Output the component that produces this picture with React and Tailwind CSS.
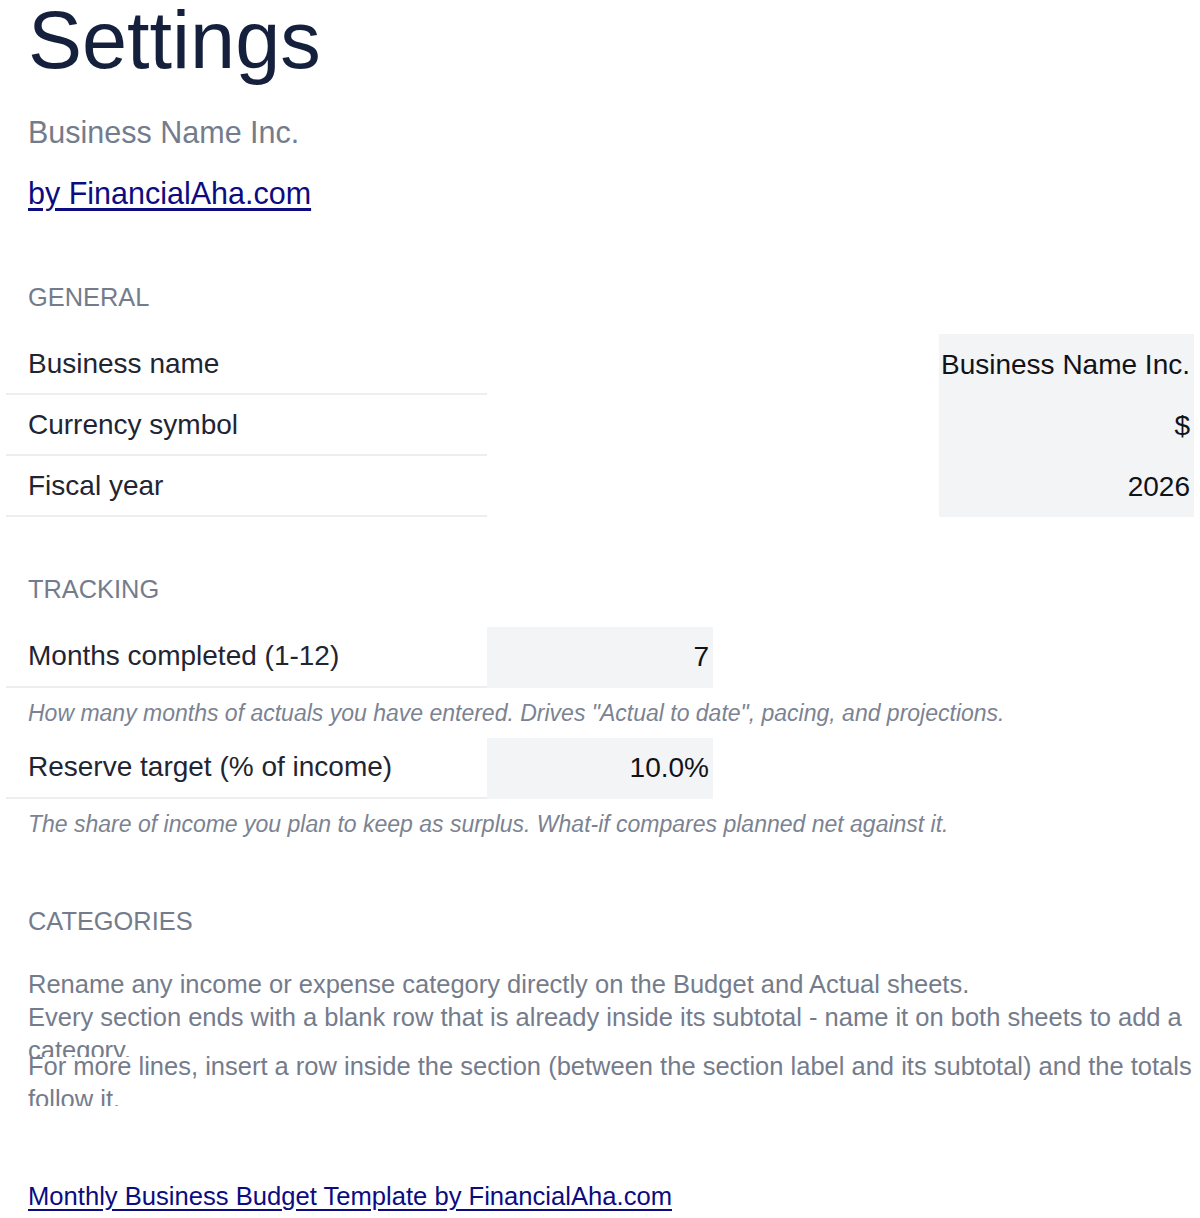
import React from "react";

const font = { fontFamily: "'Liberation Sans', Arial, sans-serif" };

function SectionTitle({ children, className = "" }) {
  return (
    <div className={`pl-[22px] text-[25.4px] leading-none text-[#747c8c] ${className}`}>{children}</div>
  );
}

function GeneralRow({ label, value }) {
  return (
    <div className="grid h-[61px] grid-cols-[481px_226px_226px_255px]">
      <div className="flex items-center border-b-2 border-[#eceef1] pl-[22px] text-[28px] text-[#1f2533]">
        {label}
      </div>
      <div />
      <div />
      <div className="flex items-center justify-end bg-[#f3f4f6] pr-[4px] text-[28px] text-[#111318]">
        {value}
      </div>
    </div>
  );
}

function TrackingRow({ label, value }) {
  return (
    <div className="grid h-[61px] grid-cols-[481px_226px]">
      <div className="flex items-center border-b-2 border-[#eceef1] pl-[22px] text-[28px] text-[#1f2533]">
        {label}
      </div>
      <div className="flex items-center justify-end bg-[#f3f4f6] pr-[4px] text-[28px] text-[#111318]">
        {value}
      </div>
    </div>
  );
}

function Note({ children }) {
  return (
    <div className="flex h-[50px] items-center whitespace-nowrap pl-[22px] text-[23px] italic text-[#7b8392]">
      {children}
    </div>
  );
}

export default function App() {
  return (
    <div className="min-h-screen w-full overflow-hidden bg-white pl-[6px]" style={font}>
      <h1 className="pl-[22px] text-[81px] leading-none text-[#15203c]">Settings</h1>
      <div className="mt-[36px] pl-[22px] text-[30.5px] leading-none text-[#747c8c]">Business Name Inc.</div>
      <div className="mt-[30px] pl-[22px] text-[30.5px] leading-none">
        <a href="#" className="text-[#0c0c80] underline underline-offset-[4px]">
          by FinancialAha.com
        </a>
      </div>

      <SectionTitle className="mt-[77px]">GENERAL</SectionTitle>
      <div className="mt-[24px]">
        <GeneralRow label="Business name" value="Business Name Inc." />
        <GeneralRow label="Currency symbol" value="$" />
        <GeneralRow label="Fiscal year" value="2026" />
      </div>

      <SectionTitle className="mt-[60px]">TRACKING</SectionTitle>
      <div className="mt-[24px]">
        <TrackingRow label="Months completed (1-12)" value="7" />
        <Note>How many months of actuals you have entered. Drives "Actual to date", pacing, and projections.</Note>
        <TrackingRow label="Reserve target (% of income)" value="10.0%" />
        <Note>The share of income you plan to keep as surplus. What-if compares planned net against it.</Note>
      </div>

      <SectionTitle className="mt-[60px]">CATEGORIES</SectionTitle>
      <div className="mt-[34px] w-[1192px] pl-[22px] text-[25.5px] leading-[33px] text-[#747c8c]">
        <div className="h-[33px] overflow-hidden">
          Rename any income or expense category directly on the Budget and Actual sheets.
        </div>
        <div className="h-[49px]">
          <div className="h-[56px] overflow-hidden">
            Every section ends with a blank row that is already inside its subtotal - name it on both sheets to add a
            category.
          </div>
        </div>
        <div className="h-[56px] overflow-hidden">
          For more lines, insert a row inside the section (between the section label and its subtotal) and the totals
          follow it.
        </div>
      </div>

      <div className="mt-[78px] pl-[22px] text-[25.6px] leading-none">
        <a href="#" className="text-[#0c0c80] underline underline-offset-[4px]">
          Monthly Business Budget Template by FinancialAha.com
        </a>
      </div>
    </div>
  );
}
